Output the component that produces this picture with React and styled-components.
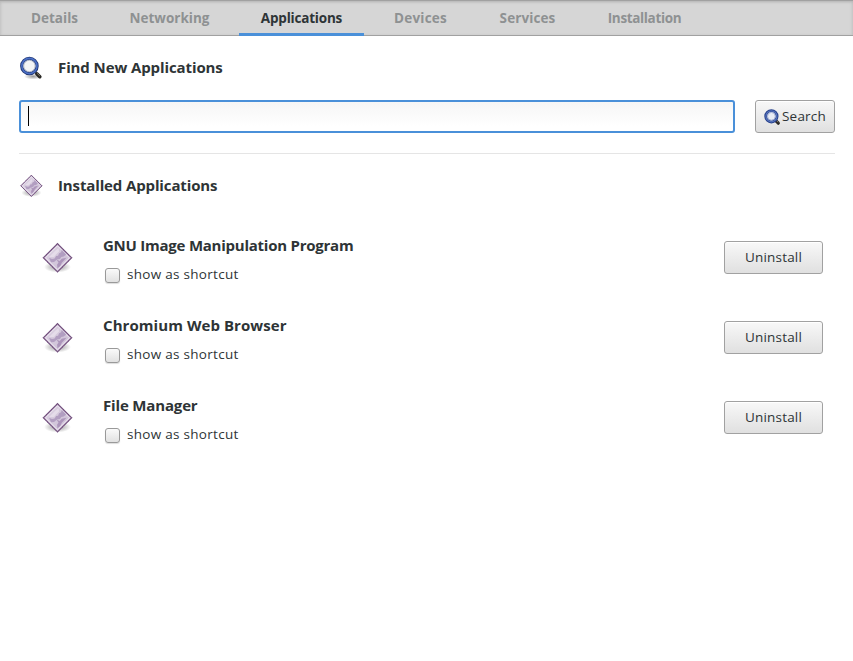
import React, { useId } from "react";
import styled, { createGlobalStyle } from "styled-components";

const GlobalStyle = createGlobalStyle`
  * { box-sizing: border-box; }
  body { margin: 0; background: #fff; color: #2e3436; font-family: "Open Sans", "Noto Sans", sans-serif; }
`;

const Page = styled.div`
  height: 661px;
  background: #fff;
  overflow: hidden;
`;

const TabBar = styled.nav`
  display: flex;
  gap: 8px;
  height: 36px;
  padding-left: 9px;
  background: #d6d6d6;
  border-top: 1px solid #a1a1a1;
  border-bottom: 1px solid #a1a1a1;
  box-shadow: inset 0 2px 3px -1px #b4b4b4, inset 2px 0 3px -1px #c4c4c4, inset -2px 0 3px -1px #c4c4c4;
`;

const Tab = styled.button`
  width: ${(p) => p.$width}px;
  height: 35px;
  padding: 3px 0 0;
  border: 0;
  border-bottom: 3px solid ${(p) => (p.$active ? "#4a90d9" : "transparent")};
  background: transparent;
  color: ${(p) => (p.$active ? "#2e3436" : "#8e9192")};
  font: 700 13.5px/29px "Open Sans", sans-serif;
  letter-spacing: ${(p) => p.$spacing || 0}px;
  text-align: center;
  white-space: nowrap;
`;

const Content = styled.main`
  padding: 20px 18px 0 19px;
`;

const SectionHeader = styled.header`
  display: flex;
  align-items: flex-start;
  gap: 15px;
  height: 24px;
  svg { flex: none; }
`;

const InstalledHeader = styled(SectionHeader)`
  margin-top: 20px;
`;

const Title = styled.h2`
  margin: 0;
  font-size: 15px;
  line-height: 22px;
  font-weight: 700;
  letter-spacing: ${(p) => p.$spacing || 0}px;
  white-space: nowrap;
`;

const SearchRow = styled.div`
  display: flex;
  gap: 20px;
  margin-top: 20px;
  padding-bottom: 20px;
  border-bottom: 1px solid #e5e5e5;
`;

const Entry = styled.div`
  flex: 1;
  height: 33px;
  padding: 4px 7px;
  border: 2px solid #4a90d9;
  border-radius: 3px;
  background: linear-gradient(#f6f6f6, #fff 85%);
`;

const Caret = styled.div`
  width: 1px;
  height: 20px;
  background: #000;
`;

const Button = styled.button`
  display: flex;
  align-items: center;
  justify-content: center;
  gap: 1px;
  width: ${(p) => p.$width}px;
  height: 33px;
  padding: 0 0 1px;
  border: 1px solid #a1a1a1;
  border-radius: 3px;
  background: linear-gradient(#f8f8f8, #e0e0e0);
  box-shadow: inset 0 1px #fff;
  color: #2e3436;
  font: 400 13.5px/20px "Open Sans", sans-serif;
  letter-spacing: 0.2px;
  svg { margin-top: 2px; flex: none; }
`;

const AppList = styled.div`
  display: flex;
  flex-direction: column;
  gap: 30px;
  padding: 34px 12px 0 22px;
`;

const AppRow = styled.article`
  display: grid;
  grid-template-columns: 62px 1fr 99px;
  height: 50px;
  align-items: center;
  > svg { margin-top: 2px; }
`;

const AppInfo = styled.div`
  height: 50px;
  padding-top: 2px;
`;

const Shortcut = styled.label`
  display: flex;
  align-items: center;
  gap: 7px;
  height: 20px;
  margin: 8px 0 0 2px;
  font-size: 13.5px;
  line-height: 20px;
  letter-spacing: 0.29px;
`;

const Check = styled.span`
  width: 15px;
  height: 15px;
  margin-top: 2px;
  border: 1px solid #999;
  border-radius: 3px;
  background: linear-gradient(#fafafa, #e1e1e1);
  box-shadow: 0 1px 1px #ddd;
`;

function Magnifier({ size }) {
  const id = useId();
  return (
    <svg width={size} height={size} viewBox="0 0 24 24">
      <defs>
        <radialGradient id={id}>
          <stop offset="0" stopColor="#000" stopOpacity=".4" />
          <stop offset="1" stopColor="#000" stopOpacity="0" />
        </radialGradient>
      </defs>
      <ellipse cx="14" cy="20.5" rx="9" ry="3" fill={`url(#${id})`} />
      <path d="M15.8 15.4l2 1.8" stroke="#999b98" strokeWidth="2.6" />
      <path d="M17.8 17.8l3 2.9" stroke="#282724" strokeWidth="3.6" strokeLinecap="round" />
      <path d="M18.1 17.3l2.8 2.7" stroke="#8b806b" strokeWidth="1" />
      <circle cx="10.4" cy="10" r="7.7" fill="#f3f4f5" stroke="#213774" strokeWidth="3.2" />
      <circle cx="10.4" cy="10" r="7.6" fill="none" stroke="#4b6fc5" strokeWidth="1.6" />
      <circle cx="10.4" cy="10" r="5.7" fill="none" stroke="#aeb5c6" strokeWidth=".9" />
    </svg>
  );
}

function ButtonMagnifier() {
  return (
    <svg width="17" height="17" viewBox="0 0 17 17">
      <path d="M11.8 11.6l2.5 2.6" stroke="#2b2926" strokeWidth="3.2" strokeLinecap="round" />
      <path d="M12.2 11.3l2 1.9" stroke="#91887a" strokeWidth=".8" />
      <circle cx="7.4" cy="7.3" r="5.7" fill="#e9edf5" stroke="#27418c" strokeWidth="2.8" />
      <circle cx="7.4" cy="7.3" r="5.5" fill="none" stroke="#5875bd" strokeWidth="1.2" />
      <circle cx="7.4" cy="7.3" r="3.9" fill="none" stroke="#9eacd2" strokeWidth=".9" />
    </svg>
  );
}

function Diamond({ size }) {
  const id = useId();
  return (
    <svg width={size} height={size} viewBox="0 0 32 32">
      <defs>
        <radialGradient id={`${id}s`}>
          <stop offset="0" stopColor="#000" stopOpacity=".42" />
          <stop offset="1" stopColor="#000" stopOpacity="0" />
        </radialGradient>
        <linearGradient id={`${id}f`} x1="0" y1="0" x2="1" y2="1">
          <stop offset="0" stopColor="#ddd3e3" />
          <stop offset="1" stopColor="#cbbcd4" />
        </linearGradient>
      </defs>
      <ellipse cx="16.5" cy="25" rx="13.5" ry="5.5" fill={`url(#${id}s)`} />
      <path d="M16.5 1.7L30.6 15.8 16.5 29.9 2.4 15.8Z" fill={`url(#${id}f)`} stroke="#8f709a" strokeWidth="1.3" />
      <path d="M16.5 3.8L28.5 15.8 16.5 27.8 4.5 15.8Z" fill="none" stroke="#eee7f1" strokeWidth="1" />
      <path d="M8 15.8l3 1.2 2.6-.5 1.5-2.5 2-.3 1-2.5 2-1 .6-2.5 4.5 4.8-2.5 2-2.5.4-1.2 2-3 .6-3 2.5-3 .2Z" fill="#a993ba" opacity=".8" />
      <path d="M15.5 17.5l3.2 1.6 2-2.4 4.8-.9-4.5 4.8-1.8 3.4-2.7 2.2-.4-3.4 1.4-2.4Z" fill="#9c82ae" opacity=".7" />
      <path d="M8 15l6-6 3.5-3 .6 3.5-3 3-2 2.5Z" fill="#eee7f2" opacity=".6" />
      <path d="M16.5 1.7L30.6 15.8 16.5 29.9 2.4 15.8Z" fill="none" stroke="#573360" strokeWidth="1" strokeDasharray="0.8 0.61" />
    </svg>
  );
}

const tabs = [
  { name: "Details", width: 91 },
  { name: "Networking", width: 123 },
  { name: "Applications", width: 125, active: true, spacing: -0.2 },
  { name: "Devices", width: 97, spacing: 0.2 },
  { name: "Services", width: 101, spacing: 0.1 },
  { name: "Installation", width: 117, spacing: -0.35 },
];

const apps = [
  { name: "GNU Image Manipulation Program", spacing: -0.24 },
  { name: "Chromium Web Browser", spacing: 0.07 },
  { name: "File Manager", spacing: -0.16 },
];

export default function App() {
  return (
    <Page>
      <GlobalStyle />
      <TabBar>
        {tabs.map((t) => (
          <Tab key={t.name} $width={t.width} $active={t.active} $spacing={t.spacing}>{t.name}</Tab>
        ))}
      </TabBar>
      <Content>
        <SectionHeader>
          <Magnifier size={24} />
          <Title $spacing={-0.1}>Find New Applications</Title>
        </SectionHeader>
        <SearchRow>
          <Entry><Caret /></Entry>
          <Button $width={80}><ButtonMagnifier />Search</Button>
        </SearchRow>
        <InstalledHeader>
          <Diamond size={24} />
          <Title $spacing={-0.13}>Installed Applications</Title>
        </InstalledHeader>
        <AppList>
          {apps.map((a) => (
            <AppRow key={a.name}>
              <Diamond size={32} />
              <AppInfo>
                <Title $spacing={a.spacing}>{a.name}</Title>
                <Shortcut><Check />show as shortcut</Shortcut>
              </AppInfo>
              <Button $width={99}>Uninstall</Button>
            </AppRow>
          ))}
        </AppList>
      </Content>
    </Page>
  );
}
